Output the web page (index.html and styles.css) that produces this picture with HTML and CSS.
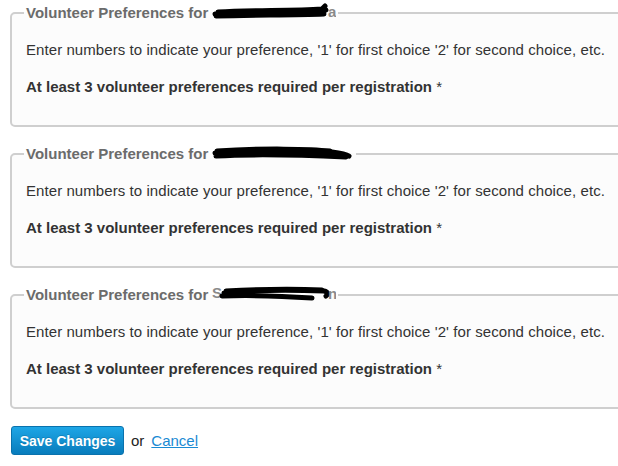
FILE: index.html
```html
<!DOCTYPE html>
<html>
<head>
<meta charset="utf-8">
<link rel="stylesheet" href="styles.css">
</head>
<body>
<form class="page">
  <fieldset class="prefs">
    <legend class="prefs-legend">Volunteer Preferences for <span class="redacted"><svg class="scribble" width="124" height="18" viewBox="0 0 124 18"><path d="M3 11 C30 8 60 9 90 9 C100 9 110 8 114 7 M4 13 C40 12 80 12 112 11 M6 9 C40 7 80 8 110 6 L113 3" stroke="#000" stroke-width="5" fill="none" stroke-linecap="round"/><text x="116" y="14" class="peek">a</text></svg></span></legend>
    <p class="intro">Enter numbers to indicate your preference, '1' for first choice '2' for second choice, etc.</p>
    <p class="req">At least 3 volunteer preferences required per registration <span class="star">*</span></p>
  </fieldset>
  <fieldset class="prefs">
    <legend class="prefs-legend">Volunteer Preferences for <span class="redacted"><svg class="scribble" width="142" height="18" viewBox="0 0 142 18"><path d="M3 9 C40 5 90 6 120 8 C128 9 134 10 137 12 M4 12 C40 10 90 11 134 13 M5 7 C50 4 100 5 118 7" stroke="#000" stroke-width="5" fill="none" stroke-linecap="round"/></svg></span></legend>
    <p class="intro">Enter numbers to indicate your preference, '1' for first choice '2' for second choice, etc.</p>
    <p class="req">At least 3 volunteer preferences required per registration <span class="star">*</span></p>
  </fieldset>
  <fieldset class="prefs">
    <legend class="prefs-legend">Volunteer Preferences for <span class="redacted"><svg class="scribble" width="124" height="18" viewBox="0 0 124 18"><text x="0" y="13" class="peek">S</text><path d="M12 8 C40 5 80 5 112 6 C116 7 117 9 114 11 M10 11 C40 10 70 11 100 13 M14 6 C50 4 90 4 110 5" stroke="#000" stroke-width="5" fill="none" stroke-linecap="round"/><text x="116" y="14" class="peek">n</text></svg></span></legend>
    <p class="intro">Enter numbers to indicate your preference, '1' for first choice '2' for second choice, etc.</p>
    <p class="req">At least 3 volunteer preferences required per registration <span class="star">*</span></p>
  </fieldset>
  <div class="actions">
    <button type="button" class="btn-save">Save Changes</button>
    <span class="or">or</span>
    <a href="#" class="cancel">Cancel</a>
  </div>
</form>
</body>
</html>
```
FILE: styles.css
```css
html, body {
  margin: 0;
  padding: 0;
  background: #fff;
  overflow: hidden;
}
body {
  font-family: "Liberation Sans", Arial, sans-serif;
  font-size: 15px;
  color: #333;
}
.page {
  padding: 4px 0 0 10px;
}
.prefs {
  margin: 0 -30px 18px 0;
  padding: 0 14px 0 14px;
  border: 2px solid #cfcfcf;
  border-radius: 5px;
  background: #fcfcfc;
  min-width: 0;
}
.prefs-legend {
  padding: 0 2px;
  margin-left: -2px;
  font-weight: bold;
  color: #6b6b6b;
  font-size: 15px;
  line-height: 17px;
  height: 17px;
}
.redacted {
  display: inline-block;
  vertical-align: top;
  height: 17px;
  margin-top: -1px;
}
.scribble {
  display: block;
}
.peek {
  font-family: "Liberation Sans", Arial, sans-serif;
  font-size: 15px;
  font-weight: bold;
  fill: #8a8a8a;
}
.intro {
  margin: 20px 0 0 0;
  line-height: 17px;
  letter-spacing: 0.07px;
}
.req {
  margin: 20px 0 30px 0;
  line-height: 17px;
  font-weight: bold;
}
.star {
  font-weight: normal;
}
.actions {
  display: flex;
  align-items: center;
  gap: 7px;
  margin-top: -1px;
  margin-left: 1px;
}
.btn-save {
  font-family: "Liberation Sans", Arial, sans-serif;
  font-size: 14px;
  font-weight: bold;
  color: #fff;
  height: 29px;
  width: 113px;
  padding: 0;
  border: 1px solid #0a72ad;
  border-radius: 3px;
  background: linear-gradient(#1ea6e6, #087cbc);
  text-shadow: 0 -1px 0 rgba(0,0,0,0.15);
}
.or {
  color: #222;
  font-size: 15px;
}
.cancel {
  color: #1a8ad3;
  font-size: 15px;
  text-decoration: underline;
}
```
